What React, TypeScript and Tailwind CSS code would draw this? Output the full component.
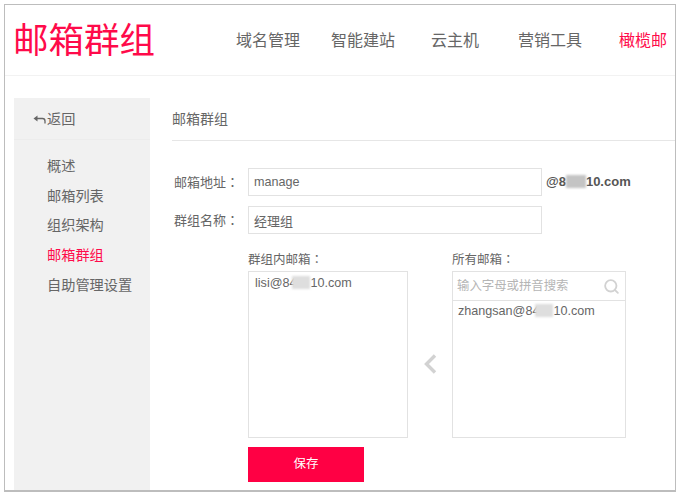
import { Search } from 'lucide-react';

const font = "[font-family:'Liberation_Sans','Noto_Sans_CJK_SC',sans-serif]";

const navItems = [
  { label: '域名管理', cls: 'ml-0 text-[#666]' },
  { label: '智能建站', cls: 'ml-[31px] text-[#666]' },
  { label: '云主机', cls: 'ml-[36px] text-[#666]' },
  { label: '营销工具', cls: 'ml-[39px] text-[#666]' },
  { label: '橄榄邮', cls: 'ml-[37px] text-[#ff0a4a]' },
];

const sideItems = ['概述', '邮箱列表', '组织架构', '邮箱群组', '自助管理设置'];

const Blur = ({ w, tone }: { w: string; tone: string }) => (
  <span className={`inline-block h-[13px] align-[-2px] blur-[1px] ${w} ${tone}`} />
);

// the colon is centred in its cell in the reference
const Colon = () => <span className="[font-family:'Noto_Sans_CJK_TC',sans-serif]">：</span>;

export default function App() {
  return (
    <div className={`w-[680px] h-[495px] bg-white pt-[4px] pl-[4px] overflow-hidden ${font}`}>
      <div className="w-[672px] h-[488px] border border-b-2 border-[#bdbdbd] flex flex-col overflow-hidden">
        {/* Header */}
        <header className="h-[71px] shrink-0 flex items-center pt-[2px] border-b border-[#f2f2f2]">
          <h1 className="ml-[8px] w-[223px] text-[35.5px] leading-[40px] text-[#ff0a4a] font-normal whitespace-nowrap">邮箱群组</h1>
          <nav className="flex text-[16px] leading-[24px]">
            {navItems.map((n) => (
              <span key={n.label} className={`whitespace-nowrap ${n.cls}`}>{n.label}</span>
            ))}
          </nav>
        </header>

        <div className="flex flex-1 pt-[22px] pl-[9px]">
          {/* Sidebar */}
          <aside className="w-[136px] shrink-0 bg-[#f1f1f1] text-[14.2px] text-[#666]">
            <div className="h-[42px] flex items-center pl-[19px] pt-[2px] border-b border-[#ececec]">
              <svg width="13" height="10" viewBox="0 0 13 10" className="text-[#666] mr-[1px]">
                <path d="M0.5 3.5 L4.5 0.5 L4.5 6.5 Z" fill="currentColor" />
                <path d="M4 3.5 H9.5 Q12 3.5 12 6 V8.5" fill="none" stroke="currentColor" strokeWidth="1.3" />
              </svg>
              <span>返回</span>
            </div>
            <ul className="pt-[12px] pl-[33px]">
              {sideItems.map((s) => (
                <li
                  key={s}
                  className={`h-[29.7px] leading-[29.7px] whitespace-nowrap ${s === '邮箱群组' ? 'text-[#ff0a4a]' : ''}`}
                >
                  {s}
                </li>
              ))}
            </ul>
          </aside>

          {/* Main */}
          <main className="flex-1 pl-[22px] text-[#666]">
            <div className="h-[43px] flex items-center border-b border-[#e6e6e6] text-[14px]">邮箱群组</div>

            <div className="mt-[27px] flex items-center h-[28px]">
              <label className="w-[76px] pl-[2px] text-[13px] whitespace-nowrap">邮箱地址<Colon /></label>
              <input
                readOnly
                value="manage"
                className="w-[294px] h-[28px] px-[5px] border border-[#e2e2e2] outline-none text-[12.6px] text-[#666]"
              />
              <span className="ml-[4px] text-[13px] font-bold text-[#555] whitespace-nowrap">
                @8<Blur w="w-[20px]" tone="bg-[#c4c4c4]" />10.com
              </span>
            </div>

            <div className="mt-[10px] flex items-center h-[28px]">
              <label className="w-[76px] pl-[2px] text-[13px] whitespace-nowrap">群组名称<Colon /></label>
              <input
                readOnly
                value="经理组"
                className="w-[294px] h-[28px] px-[5px] border border-[#e2e2e2] outline-none text-[13px] text-[#666]"
              />
            </div>

            <div className="mt-[15px] ml-[76px] flex">
              <div className="w-[160px]">
                <div className="h-[22px] pt-[1px] text-[12.5px] leading-[17px] whitespace-nowrap">群组内邮箱<Colon /></div>
                <div className="h-[167px] border border-[#e2e2e2] px-[6px] pt-[2px] text-[12.6px] leading-[18px] whitespace-nowrap">
                  lisi@84<Blur w="w-[18px] -ml-[4px]" tone="bg-[#dedede]" />10.com
                </div>
              </div>

              <div className="w-[44px] flex items-center justify-center pt-[40px]">
                <svg width="14" height="20" viewBox="0 0 14 20" className="text-[#d2d2d2]">
                  <polyline points="12,1.5 3.5,10 12,18.5" fill="none" stroke="currentColor" strokeWidth="3.4" />
                </svg>
              </div>

              <div className="w-[174px]">
                <div className="h-[22px] pt-[1px] text-[12.5px] leading-[17px] whitespace-nowrap">所有邮箱<Colon /></div>
                <div className="h-[167px] border border-[#e2e2e2]">
                  <div className="h-[29px] flex items-center justify-between pl-[4px] pr-[5px] border-b border-[#e2e2e2]">
                    <span className="text-[12.4px] text-[#b5b5b5] whitespace-nowrap">输入字母或拼音搜索</span>
                    <Search size={17} strokeWidth={2.6} className="text-[#d2d2d2]" />
                  </div>
                  <div className="px-[5px] pt-[1px] text-[12.6px] leading-[18px] whitespace-nowrap">
                    zhangsan@84<Blur w="w-[18px] -ml-[4px]" tone="bg-[#dedede]" />10.com
                  </div>
                </div>
              </div>
            </div>

            <button className="mt-[9px] ml-[76px] block w-[116px] h-[35px] bg-[#ff0044] text-white text-[12.5px]">保存</button>
          </main>
        </div>
      </div>
    </div>
  );
}
